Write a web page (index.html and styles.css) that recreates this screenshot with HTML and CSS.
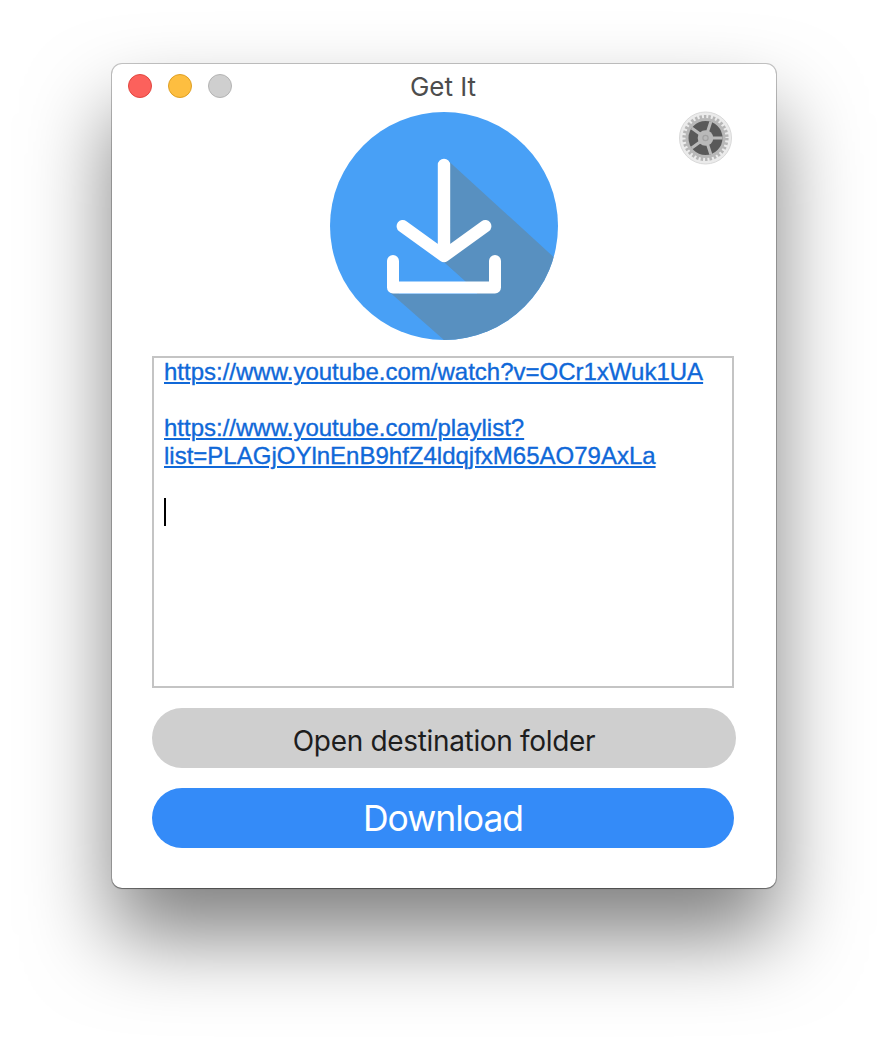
FILE: index.html
```html
<!DOCTYPE html>
<html lang="en">
<head>
<meta charset="utf-8">
<title>Get It</title>
<link rel="stylesheet" href="styles.css">
</head>
<body>
<main class="window">
  <header class="titlebar">
    <div class="lights"><span class="light close"></span><span class="light minimize"></span><span class="light zoom"></span></div>
    <h1 class="title">Get It</h1>
  </header>
  <section class="hero">
    <svg class="logo" viewBox="0 0 228 228">
      <defs><clipPath id="disc"><circle cx="114" cy="114" r="114"/></clipPath></defs>
      <circle cx="114" cy="114" r="114" fill="#48a0f6"/>
      <g clip-path="url(#disc)">
        <path d="M118.500 49L240 160V228H114L60 180.500L76 176H136L113 150L119 130Z" fill="#5890c0"/>
        <path d="M69 155H114V150L135 169L147 181V182H69Z" fill="#48a0f6"/>
        <path d="M119 149L113 149L152 183H166V149Z" fill="#5890c0"/>
      </g>
      <g fill="none" stroke="#fff" stroke-width="12.400" stroke-linecap="round" stroke-linejoin="round">
        <path d="M114 53V143M72.800 114.200L114 144L155.200 114.200"/>
        <path stroke-width="12" d="M63 149V175.500H165V149"/>
      </g>
    </svg>
    <button class="settings" aria-label="Settings">
      <svg viewBox="0 0 54 54" width="54" height="54">
        <circle cx="27.500" cy="27" r="26" fill="#ebebeb" stroke="#d9d9d9"/>
        <circle cx="27.500" cy="27" r="21.200" fill="none" stroke="#b6b6b6" stroke-width="3.800" stroke-dasharray="2.440 2"/>
        <circle cx="27.500" cy="27" r="18.500" fill="#595959" stroke="#b8b8b8" stroke-width="3"/>
        <g stroke="#b9b9b9" stroke-width="3">
          <path d="M27.500 27H44.500M27.500 27L32.800 10.800M27.500 27L13.700 17M27.500 27L13.700 37M27.500 27L32.800 43.200"/>
        </g>
        <circle cx="27.500" cy="27" r="7.800" fill="#b9b9b9"/>
        <circle cx="27.500" cy="27" r="2.600" fill="#b9b9b9" stroke="#a2a2a2" stroke-width="1.200"/>
      </svg>
    </button>
  </section>
  <div class="urls">
    <div><a>https://www.youtube.com/watch?v=OCr1xWuk1UA</a></div>
    <div></div>
    <div><a>https://www.youtube.com/playlist?</a></div>
    <div><a>list=PLAGjOYlnEnB9hfZ4ldqjfxM65AO79AxLa</a></div>
    <div></div>
    <div class="caret"></div>
  </div>
  <button class="button open"><span>Open destination folder</span></button>
  <button class="button download"><span>Download</span></button>
</main>
</body>
</html>
```
FILE: styles.css
```css
* { box-sizing: border-box; }
body { margin: 0; height: 1048px; padding: 64px 112px; background: #fff; overflow: hidden; }
.window {
  width: 664px; height: 824px; padding: 0 40px; border-radius: 10px; background: #fff;
  display: flex; flex-direction: column; align-items: flex-start;
  box-shadow: 0 0 0 1px rgba(0,0,0,.22), 0 1px 1px rgba(0,0,0,.3), 0 48px 84px rgba(0,0,0,.5);
}
.titlebar { align-self: stretch; height: 48px; margin: 0 -24px; display: grid; grid-template-columns: 1fr auto 1fr; }
.lights { display: flex; gap: 16px; padding-top: 10px; }
.light { width: 24px; height: 24px; border-radius: 50%; border: 1px solid; }
.close { background: #fc615c; border-color: #e2463f; }
.minimize { background: #fdbe40; border-color: #dfa023; }
.zoom { background: #cfcfcf; border-color: #b4b4b4; }
.title { margin: 7px 2px 0 0; font: 400 26px/32px Inter, sans-serif; color: #4d4d4d; }
.hero { align-self: stretch; display: grid; grid-template-columns: 1fr 228px 1fr; }
.logo { width: 228px; height: 228px; grid-column: 2; }
.settings { border: 0; padding: 0; background: none; width: 54px; height: 54px; margin: -1px 4px 0 0; justify-self: end; }
.settings svg { display: block; }
.urls {
  width: 582px; height: 332px; margin-top: 16px; padding: 0 10px; border: 2px solid #c4c4c4;
  font: 24px/28px "Liberation Sans", Arial, sans-serif; color: #1068d8; white-space: nowrap;
  -webkit-text-stroke: .35px #1068d8;
}
.urls > div { height: 28px; }
.urls a { text-decoration: underline; text-decoration-thickness: 2px; text-underline-offset: 2px; text-decoration-skip-ink: auto; }
.caret { width: 2px; background: #000; }
.button { border: 0; height: 60px; border-radius: 30px; margin-top: 20px; padding: 0; font-family: Inter, sans-serif; }
.open { width: 584px; background: #cfcfcf; color: #1d1d1d; font-size: 28px; padding-top: 5px; letter-spacing: -.33px; }
.download { width: 582px; background: #348bf8; color: #fff; font-size: 35.5px; font-weight: 400; letter-spacing: -1px; }
```
